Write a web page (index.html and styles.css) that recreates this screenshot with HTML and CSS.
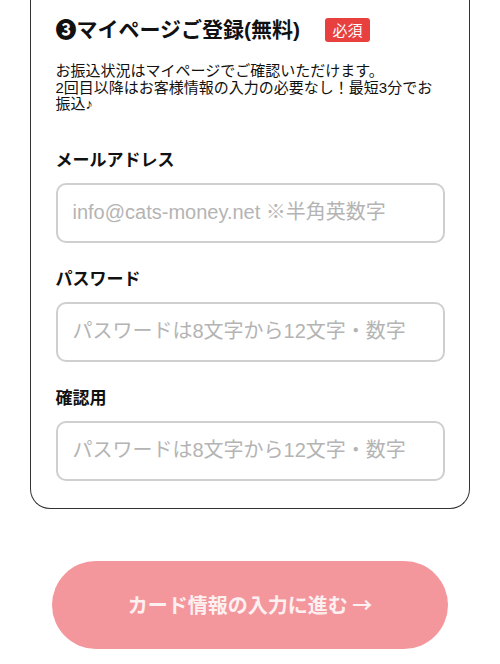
FILE: index.html
```html
<!DOCTYPE html>
<html lang="ja">
<head>
<meta charset="utf-8">
<title>マイページご登録</title>
<link rel="stylesheet" href="styles.css">
</head>
<body>
<div class="card">
  <div class="title-row">
    <h2 class="title">❸マイページご登録(無料)</h2>
    <span class="badge">必須</span>
  </div>
  <p class="desc">お振込状況はマイページでご確認いただけます。<br>2回目以降はお客様情報の入力の必要なし！最短3分でお振込♪</p>
  <div class="field">
    <label class="label">メールアドレス</label>
    <input class="input" type="text" placeholder="info@cats-money.net ※半角英数字">
  </div>
  <div class="field">
    <label class="label">パスワード</label>
    <input class="input" type="password" placeholder="パスワードは8文字から12文字・数字">
  </div>
  <div class="field">
    <label class="label">確認用</label>
    <input class="input" type="password" placeholder="パスワードは8文字から12文字・数字">
  </div>
</div>
<div class="actions">
  <button class="next-btn" type="button">カード情報の入力に進む →</button>
</div>
</body>
</html>
```
FILE: styles.css
```css
html, body {
  margin: 0;
  padding: 0;
  background: #ffffff;
}
body {
  font-family: "Liberation Sans", "Noto Sans CJK JP", sans-serif;
  color: #111;
}
.card {
  margin: 0 30px;
  border: 1.5px solid #333;
  border-top: none;
  border-radius: 0 0 20px 20px;
  padding: 18px 24.5px 27px;
}
.title-row {
  display: flex;
  align-items: center;
  height: 24px;
}
.title {
  margin: 0;
  font-size: 21px;
  font-weight: bold;
  line-height: 24px;
  color: #111;
}
.badge {
  margin-left: 25px;
  width: 45px;
  height: 24px;
  background: #e8403f;
  color: #fff;
  border-radius: 3px;
  font-size: 15px;
  line-height: 24px;
  text-align: center;
  font-family: "Noto Sans CJK JP", sans-serif;
}
.desc {
  margin: 21px 0 36px;
  font-size: 15px;
  line-height: 16.5px;
  color: #111;
}
.field {
  margin-bottom: 25px;
}
.field:last-child {
  margin-bottom: 0;
}
.label {
  display: block;
  font-size: 17px;
  font-weight: bold;
  line-height: 24px;
  margin-bottom: 10px;
  color: #111;
}
.input {
  display: block;
  box-sizing: border-box;
  width: 100%;
  height: 60px;
  border: 2px solid #cfcfcf;
  border-radius: 10px;
  padding: 0 15px;
  font-family: "Liberation Sans", "Noto Sans CJK JP", sans-serif;
  font-size: 20px;
  color: #333;
  background: #fff;
  outline: none;
}
.input::placeholder {
  color: #b4b4b4;
}
.actions {
  display: flex;
  justify-content: center;
  margin-top: 52px;
}
.next-btn {
  width: 396px;
  height: 88px;
  border: none;
  border-radius: 44px;
  background: #f3979d;
  color: #fdf0f1;
  font-family: "Noto Sans CJK JP", sans-serif;
  font-size: 20px;
  font-weight: bold;
  cursor: pointer;
}
```
